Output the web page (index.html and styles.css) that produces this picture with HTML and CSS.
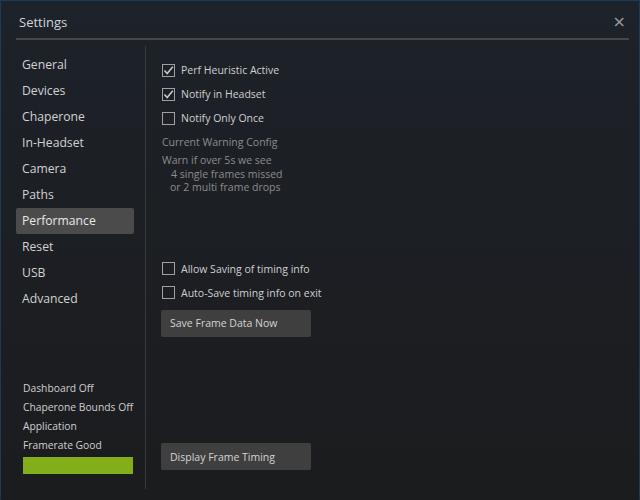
FILE: index.html
```html
<!DOCTYPE html>
<html>
<head>
<meta charset="utf-8">
<link rel="stylesheet" href="styles.css">
</head>
<body>
<div class="window">
  <div class="titlebar">
    <span class="title">Settings</span>
    <span class="close">×</span>
  </div>
  <div class="rule"></div>
  <div class="main">
    <div class="sidebar">
      <ul class="nav">
        <li>General</li>
        <li>Devices</li>
        <li>Chaperone</li>
        <li>In-Headset</li>
        <li>Camera</li>
        <li>Paths</li>
        <li class="active">Performance</li>
        <li>Reset</li>
        <li>USB</li>
        <li>Advanced</li>
      </ul>
      <div class="status">
        <div>Dashboard Off</div>
        <div>Chaperone Bounds Off</div>
        <div>Application</div>
        <div>Framerate Good</div>
        <div class="bar"></div>
      </div>
    </div>
    <div class="content">
      <div class="group">
        <label class="check"><span class="box checked"><svg viewBox="0 0 13 13" width="13" height="13"><path d="M2.5 6.5 L5.2 9.5 L10.8 2.8" fill="none" stroke="#c8c8c8" stroke-width="1.6"/></svg></span>Perf Heuristic Active</label>
        <label class="check"><span class="box checked"><svg viewBox="0 0 13 13" width="13" height="13"><path d="M2.5 6.5 L5.2 9.5 L10.8 2.8" fill="none" stroke="#c8c8c8" stroke-width="1.6"/></svg></span>Notify in Headset</label>
        <label class="check"><span class="box"></span>Notify Only Once</label>
      </div>
      <div class="config-title">Current Warning Config</div>
      <div class="config">
        <div>Warn if over 5s we see</div>
        <div class="indent">4 single frames missed</div>
        <div class="indent2">or 2 multi frame drops</div>
      </div>
      <div class="group timing">
        <label class="check"><span class="box"></span>Allow Saving of timing info</label>
        <label class="check"><span class="box"></span>Auto-Save timing info on exit</label>
      </div>
      <button class="btn">Save Frame Data Now</button>
      <div class="spacer"></div>
      <button class="btn">Display Frame Timing</button>
    </div>
  </div>
</div>
</body>
</html>
```

FILE: styles.css
```css
html, body {
  margin: 0;
  padding: 0;
  background: #1b1c1e;
}
body {
  font-family: "Open Sans", "DejaVu Sans", sans-serif;
  color: #d4d4d4;
}
.window {
  width: 640px;
  height: 500px;
  box-sizing: border-box;
  border: 1px solid #1f3a55;
  border-bottom-color: #1b1c1e;
  background: linear-gradient(to bottom, #1d232a 0%, #1c1f24 40%, #1b1c1e 100%);
  display: flex;
  flex-direction: column;
}
.titlebar {
  height: 37px;
  display: flex;
  align-items: center;
  justify-content: space-between;
  padding: 0 13px 0 18px;
}
.title {
  font-size: 13px;
  color: #d0d4d8;
  margin-top: 4px;
}
.close {
  font-size: 16px;
  color: #9a9a9a;
  margin-top: 3px;
  font-family: "DejaVu Sans", sans-serif;
}
.rule {
  height: 2px;
  background: #474747;
  margin: 0 10px 0 15px;
}
.main {
  flex: 1;
  display: flex;
  padding-top: 6px;
  padding-bottom: 10px;
}
.sidebar {
  width: 129px;
  padding-left: 15px;
  border-right: 1px solid #3a3a3a;
  display: flex;
  flex-direction: column;
  justify-content: space-between;
}
.nav {
  list-style: none;
  margin: 6px 0 0 0;
  padding: 0;
  width: 118px;
}
.nav li {
  height: 26px;
  line-height: 26px;
  font-size: 12.2px;
  padding-left: 6px;
  color: #d2d2d2;
  border-radius: 2px;
}
.nav li.active {
  background: #4b4b4b;
  color: #e8e8e8;
}
.status {
  padding-left: 7px;
  font-size: 10.3px;
  line-height: 19px;
  color: #d0d0d0;
  margin-bottom: 15px;
}
.bar {
  width: 110px;
  height: 17px;
  background: #82ae1a;
  margin-top: 2px;
}
.content {
  flex: 1;
  padding-left: 15px;
  padding-top: 12px;
  padding-bottom: 19px;
  display: flex;
  flex-direction: column;
  align-items: flex-start;
}
.group {
  display: flex;
  flex-direction: column;
}
.check {
  display: flex;
  align-items: center;
  height: 24px;
  font-size: 10.5px;
  color: #d0d0d0;
}
.box {
  width: 11px;
  height: 11px;
  border: 1px solid #a0a0a0;
  margin-right: 6px;
  margin-left: 1px;
  position: relative;
  flex: none;
}
.box svg {
  position: absolute;
  left: -1px;
  top: -1px;
}
.config-title {
  font-size: 10.5px;
  color: #8c8c8c;
  margin-top: 5px;
  margin-left: 1px;
}
.config {
  font-size: 10.5px;
  color: #8c8c8c;
  line-height: 13.5px;
  margin-top: 5px;
  margin-left: 1px;
}
.indent { padding-left: 9px; }
.indent2 { padding-left: 8px; }
.timing {
  margin-top: 62px;
}
.btn {
  width: 150px;
  height: 27px;
  margin-top: 5px;
  background: #3f3f3f;
  border: none;
  border-radius: 2px;
  color: #d4d4d4;
  font-family: "Open Sans", "DejaVu Sans", sans-serif;
  font-size: 10.5px;
  text-align: left;
  padding-left: 9px;
}
.spacer {
  flex: 1;
}
```
